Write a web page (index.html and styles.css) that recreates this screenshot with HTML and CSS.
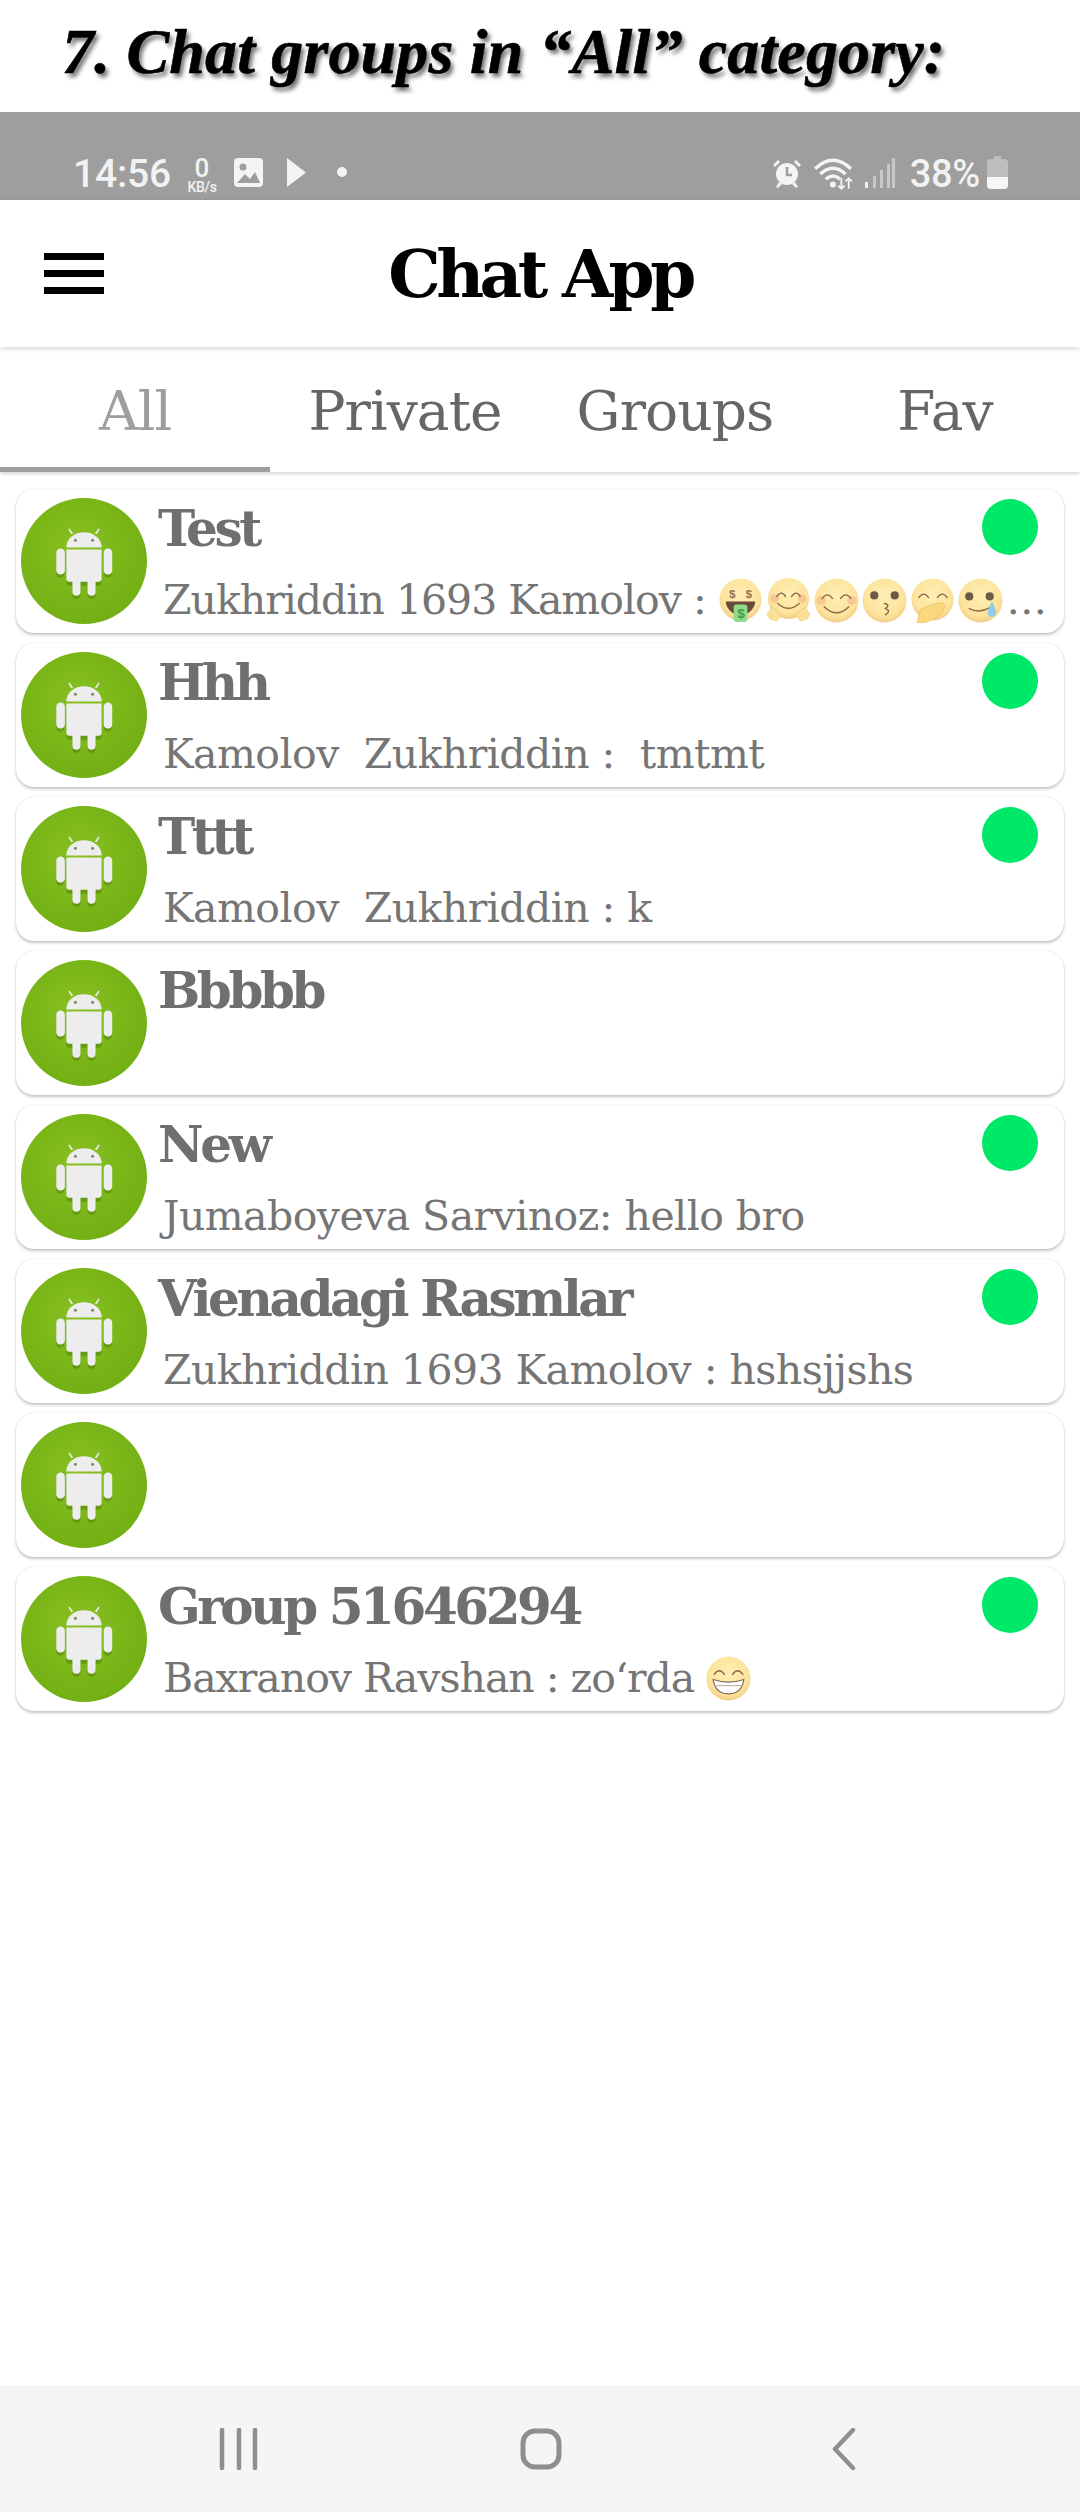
FILE: index.html
```html
<!DOCTYPE html>
<html lang="en">
<head>
<meta charset="utf-8">
<title>Chat App</title>
<link rel="stylesheet" href="styles.css">
</head>
<body>
<svg class="defs" width="0" height="0" aria-hidden="true">
  <defs>
    <radialGradient id="face" cx="50%" cy="40%" r="60%"><stop offset="0" stop-color="#ffeeb4"/><stop offset=".75" stop-color="#fde49c"/><stop offset="1" stop-color="#f2cd8a"/></radialGradient>
    <radialGradient id="ava" cx="45%" cy="40%" r="70%"><stop offset="0" stop-color="#88c020"/><stop offset="1" stop-color="#6fad12"/></radialGradient>
    <symbol id="android" viewBox="0 0 125 125">
      <circle cx="62.5" cy="62.5" r="62.5" fill="url(#ava)"/>
      <g fill="#2d5a00" opacity=".3" transform="translate(0 3)">
        <rect x="45" y="50" width="35" height="34" rx="3"/><rect x="35" y="50" width="8" height="26" rx="4"/><rect x="82" y="50" width="8" height="26" rx="4"/><rect x="51" y="80" width="8" height="17" rx="4"/><rect x="66" y="80" width="8" height="17" rx="4"/>
      </g>
      <g fill="#ededed">
        <path d="M45 49c0-9 8-15 17.500-15S80 40 80 49z"/>
        <path d="M50 36l-3-5 1.200-.8 3.500 5zM75 36l3-5-1.200-.8-3.500 5z"/>
        <path d="M45 51h35v29a3 3 0 0 1-3 3h-3v10a4 4 0 0 1-8 0V83h-7v10a4 4 0 0 1-8 0V83h-3a3 3 0 0 1-3-3z"/>
        <rect x="35" y="50" width="8.500" height="26" rx="4.200"/><rect x="82" y="50" width="8.500" height="26" rx="4.200"/>
      </g>
      <circle cx="54" cy="42" r="1.500" fill="#7a8a60"/><circle cx="71" cy="42" r="1.500" fill="#7a8a60"/>
    </symbol>
    <symbol id="e-money" viewBox="0 0 44 46">
      <circle cx="22" cy="22" r="21.500" fill="url(#face)"/>
      <path d="M7 24h30c0 7-7 14-15 14S7 31 7 24z" fill="#6b4a3a"/>
      <rect x="15" y="27" width="14" height="18" rx="3" fill="#8fdc8c"/>
      <text class="e-cash" x="22" y="41" text-anchor="middle">$</text>
      <text class="e-cash2" x="13" y="20" text-anchor="middle">$</text>
      <text class="e-cash2" x="30" y="20" text-anchor="middle">$</text>
    </symbol>
    <symbol id="e-hug" viewBox="0 0 46 46">
      <circle cx="23" cy="21" r="21" fill="url(#face)"/>
      <circle cx="9" cy="21" r="4.500" fill="#f7b08a" opacity=".6"/><circle cx="37" cy="21" r="4.500" fill="#f7b08a" opacity=".6"/>
      <path class="e-line" d="M11 19q5-7 9 0M26 19q5-7 9 0M12 26q11 10 22 0"/>
      <path d="M1 37l5-7 6 4 3 4-4 6-7-2zM45 37l-5-7-6 4-3 4 4 6 7-2z" fill="#fbdf94" stroke="#e8c77e" stroke-width=".6"/>
    </symbol>
    <symbol id="e-smile" viewBox="0 0 44 44">
      <circle cx="22" cy="22" r="21.500" fill="url(#face)"/>
      <circle cx="7" cy="22" r="4.500" fill="#f7b08a" opacity=".6"/><circle cx="37" cy="22" r="4.500" fill="#f7b08a" opacity=".6"/>
      <path class="e-line" d="M8 20q5-7 10 0M26 20q5-7 10 0M10 28q12 12 24 0"/>
    </symbol>
    <symbol id="e-kiss" viewBox="0 0 44 44">
      <circle cx="22" cy="22" r="21.500" fill="url(#face)"/>
      <circle cx="12" cy="17" r="4" fill="#6b5a48"/><circle cx="32" cy="17" r="4" fill="#6b5a48"/>
      <path class="e-line" d="M22 25q6 1 1 5q6 2 0 6"/>
    </symbol>
    <symbol id="e-cover" viewBox="0 0 44 46">
      <circle cx="22" cy="22" r="21.500" fill="url(#face)"/>
      <path class="e-line" d="M8 20q5-7 10 0M27 20q5-7 10 0"/>
      <path d="M6 46l4-14 12-5 10-2 3 4-4 8-10 6-8 3z" fill="#fbd77e" stroke="#e7ba5f" stroke-width=".7"/>
    </symbol>
    <symbol id="e-tear" viewBox="0 0 44 44">
      <circle cx="22" cy="22" r="21.500" fill="url(#face)"/>
      <circle cx="11" cy="18" r="4" fill="#6b5a48"/><circle cx="31" cy="18" r="4" fill="#6b5a48"/>
      <path class="e-line" d="M11 30q10 5 20 -1"/>
      <path d="M33 23q5 8 4 11a4 4 0 0 1-8 0q0-3 4-11z" fill="#8fcce8"/>
    </symbol>
    <symbol id="e-grin" viewBox="0 0 44 44">
      <circle cx="22" cy="22" r="21.500" fill="url(#face)"/>
      <path class="e-line" d="M8 18q5-7 10 0M26 18q5-7 10 0"/>
      <path d="M7 23q15 5 30 0q-2 14-15 14T7 23z" fill="#fff" stroke="#7b6a55" stroke-width="1.200"/>
      <path d="M8 29h28" stroke="#b9ad9c" stroke-width="1"/>
    </symbol>
  </defs>
</svg>

<div class="page">
  <h1 class="caption">7. Chat groups in “All” category:</h1>

  <div class="status">
    <div class="status-left">
      <span class="clock">14:56</span>
      <span class="speed"><b>0</b><i>KB/s</i></span>
      <svg class="ic-img" viewBox="0 0 29 29"><rect width="29" height="29" rx="4" fill="#f4f4f4"/><circle cx="9" cy="9" r="3.500" fill="#9e9e9e"/><path d="M3 25l8-9 5 5 5-7 5 11z" fill="#9e9e9e"/></svg>
      <svg class="ic-play" viewBox="0 0 19 29"><path d="M0 0l19 14.500L0 29z" fill="#f4f4f4"/></svg>
      <span class="dot-small"></span>
    </div>
    <div class="status-right">
      <svg class="ic-alarm" viewBox="0 0 30 30"><circle cx="15" cy="16" r="11" fill="#f4f4f4"/><path d="M1 7l5-5 2 2-5 5zM29 7l-5-5-2 2 5 5zM7 24l-3 5 2 1 4-4zM23 24l3 5-2 1-4-4z" fill="#f4f4f4"/><path d="M15 9v8h5" stroke="#9e9e9e" stroke-width="2.500" fill="none"/></svg>
      <svg class="ic-wifi" viewBox="0 0 38 32"><g fill="none" stroke="#f4f4f4" stroke-width="3.200"><path d="M1 11Q18-5 35 11"/><path d="M6 16Q18 5 30 16"/><path d="M11 21q7-6 14 0"/></g><circle cx="18" cy="26" r="2.800" fill="#f4f4f4"/><path d="M26 20v10m-3-3l3 3 3-3M33 30V20m-3 3l3-3 3 3" stroke="#f4f4f4" stroke-width="1.700" fill="none"/></svg>
      <svg class="ic-signal" viewBox="0 0 30 30"><g fill="#c8c8c8"><rect x="0" y="24" width="3" height="6" fill="#f0f0f0"/><rect x="8" y="18" width="3" height="12"/><rect x="15" y="12" width="3" height="18"/><rect x="22" y="6" width="3" height="24"/><rect x="27" y="0" width="3" height="30"/></g></svg>
      <span class="pct">38%</span>
      <svg class="ic-batt" viewBox="0 0 21 33"><path d="M7 0h7v3h3a4 4 0 0 1 4 4v22a4 4 0 0 1-4 4H4a4 4 0 0 1-4-4V7a4 4 0 0 1 4-4h3z" fill="#bdbdbd"/><path d="M0 21h21v8a4 4 0 0 1-4 4H4a4 4 0 0 1-4-4z" fill="#f6f6f6"/></svg>
    </div>
  </div>

  <header class="appbar">
    <div class="burger"><span></span><span></span><span></span></div>
    <div class="app-title">Chat App</div>
  </header>

  <nav class="tabs">
    <div class="tab tab-active">All</div>
    <div class="tab">Private</div>
    <div class="tab">Groups</div>
    <div class="tab">Fav</div>
  </nav>

  <main class="list">
    <article class="card">
      <svg class="avatar"><use href="#android"/></svg>
      <div class="body">
        <div class="name-row"><span class="name">Test</span><span class="online"></span></div>
        <div class="msg msg-tight">Zukhriddin 1693 Kamolov :
          <svg class="emo emo-first"><use href="#e-money"/></svg><svg class="emo"><use href="#e-hug"/></svg><svg class="emo"><use href="#e-smile"/></svg><svg class="emo"><use href="#e-kiss"/></svg><svg class="emo"><use href="#e-cover"/></svg><svg class="emo"><use href="#e-tear"/></svg><span class="more">...</span></div>
      </div>
    </article>
    <article class="card">
      <svg class="avatar"><use href="#android"/></svg>
      <div class="body">
        <div class="name-row"><span class="name">Hhh</span><span class="online"></span></div>
        <div class="msg">Kamolov&nbsp; Zukhriddin :&nbsp; tmtmt</div>
      </div>
    </article>
    <article class="card">
      <svg class="avatar"><use href="#android"/></svg>
      <div class="body">
        <div class="name-row"><span class="name">Tttt</span><span class="online"></span></div>
        <div class="msg">Kamolov&nbsp; Zukhriddin : k</div>
      </div>
    </article>
    <article class="card">
      <svg class="avatar"><use href="#android"/></svg>
      <div class="body">
        <div class="name-row"><span class="name">Bbbbb</span></div>
      </div>
    </article>
    <article class="card">
      <svg class="avatar"><use href="#android"/></svg>
      <div class="body">
        <div class="name-row"><span class="name">New</span><span class="online"></span></div>
        <div class="msg">Jumaboyeva Sarvinoz: hello bro</div>
      </div>
    </article>
    <article class="card">
      <svg class="avatar"><use href="#android"/></svg>
      <div class="body">
        <div class="name-row"><span class="name">Vienadagi Rasmlar</span><span class="online"></span></div>
        <div class="msg">Zukhriddin 1693 Kamolov : hshsjjshs</div>
      </div>
    </article>
    <article class="card">
      <svg class="avatar"><use href="#android"/></svg>
      <div class="body"></div>
    </article>
    <article class="card">
      <svg class="avatar"><use href="#android"/></svg>
      <div class="body">
        <div class="name-row"><span class="name">Group 51646294</span><span class="online"></span></div>
        <div class="msg msg-tight">Baxranov Ravshan : zoʻrda <svg class="emo emo-first"><use href="#e-grin"/></svg></div>
      </div>
    </article>
  </main>

  <footer class="navbar">
    <svg class="nav-ic nav-recents" viewBox="0 0 40 42"><path d="M3 2v38M20 2v38M36 2v38" stroke="#8f8f8f" stroke-width="4.500" stroke-linecap="round" fill="none"/></svg>
    <svg class="nav-ic nav-home" viewBox="0 0 42 42"><rect x="3" y="3" width="36" height="36" rx="12" stroke="#8f8f8f" stroke-width="5" fill="none"/></svg>
    <svg class="nav-ic nav-back" viewBox="0 0 24 42"><path d="M21 2L3 21l18 19" stroke="#8f8f8f" stroke-width="4.500" stroke-linecap="round" stroke-linejoin="round" fill="none"/></svg>
  </footer>
</div>
</body>
</html>
```

FILE: styles.css
```css
* { box-sizing: border-box; }
html, body { margin: 0; padding: 0; background: #fff; }
body { font-family: "DejaVu Serif", "Liberation Serif", serif; }
.defs { position: absolute; }
.page { width: 1080px; height: 2512px; display: flex; flex-direction: column; overflow: hidden; }

.caption {
  height: 112px; margin: 0; padding: 14px 0 0 62px;
  font: italic 700 64px/76px "Liberation Serif", serif;
  letter-spacing: 0.15px; color: #000; white-space: nowrap;
  -webkit-text-stroke: .6px #000;
  text-shadow: 3px 4px 4px rgba(0,0,0,.55);
}

.status {
  height: 88px; background: #9e9e9e; padding: 42px 72px 0 73px;
  display: flex; justify-content: space-between; align-items: flex-start;
  color: #f2f2f2; font-family: Roboto, sans-serif;
}
.status-left, .status-right { display: flex; align-items: flex-start; }
.clock { font-size: 39px; line-height: 40px; font-weight: 500; width: 103px; letter-spacing: -.2px; }
.speed { width: 52px; margin-right: 6px; display: flex; flex-direction: column; align-items: center; margin-top: 2px; }
.speed b { font-weight: 500; font-size: 26px; line-height: 24px; }
.speed i { font-style: normal; font-weight: 500; font-size: 14px; line-height: 14px; letter-spacing: -.3px; }
.ic-img { width: 29px; height: 29px; margin: 4px 0 0 0; }
.ic-play { width: 19px; height: 29px; margin: 4px 0 0 24px; }
.dot-small { width: 10px; height: 10px; border-radius: 50%; background: #f4f4f4; margin: 13px 0 0 31px; }
.ic-alarm { width: 30px; height: 30px; margin-top: 4px; }
.ic-wifi { width: 40px; height: 34px; margin: 3px 0 0 12px; }
.ic-signal { width: 30px; height: 30px; margin: 4px 0 0 11px; }
.pct { font-size: 38px; line-height: 40px; font-weight: 500; margin-left: 15px; letter-spacing: -.3px; }
.ic-batt { width: 21px; height: 33px; margin: 2px 0 0 7px; }

.appbar {
  height: 147px; position: relative; z-index: 1; display: flex; align-items: center; justify-content: center;
  background: #fff; box-shadow: 0 2px 5px rgba(0,0,0,.16);
}
.burger { position: absolute; left: 44px; top: 53px; width: 60px; display: flex; flex-direction: column; gap: 10px; }
.burger span { display: block; height: 7px; background: #000; }
.app-title { font-size: 66px; font-weight: 700; color: #000; letter-spacing: -4.600px; line-height: 80px; }

.tabs {
  height: 125px; display: grid; grid-template-columns: repeat(4, 1fr);
  background: #fff; box-shadow: 0 2px 3px rgba(0,0,0,.16); position: relative;
}
.tab {
  display: flex; align-items: center; justify-content: center; padding-top: 8px;
  font-size: 55px; letter-spacing: -.9px; color: #666; border-bottom: 5px solid transparent;
}
.tab-active { color: #9e9e9e; border-bottom-color: #9e9e9e; }

.list { flex: 1; padding: 17px 16px 0; display: flex; flex-direction: column; gap: 10px; }
.card {
  height: 144px; background: #fff; border-radius: 18px; display: flex; align-items: flex-start;
  padding: 9px 0 0 5px; box-shadow: 0 2px 3px rgba(0,0,0,.22), 0 0 1px rgba(0,0,0,.2);
}
.avatar { width: 126px; height: 126px; flex: none; }
.body { flex: 1; min-width: 0; padding: 0 26px 0 11px; }
.name-row { display: flex; justify-content: space-between; align-items: flex-start; height: 62px; }
.name { font-size: 50px; font-weight: 700; line-height: 62px; color: #6f6f6f; letter-spacing: -3.400px; white-space: nowrap; }
.online { width: 56px; height: 56px; border-radius: 50%; background: #00e868; margin-top: 1px; }
.msg {
  font-size: 41px; line-height: 50px; color: #757575; white-space: nowrap; padding-left: 5px; margin-top: 15px;
  letter-spacing: -.55px; display: flex; align-items: center;
}
.msg-tight { letter-spacing: -1px; }
.emo { width: 45px; height: 45px; flex: none; margin-left: 3px; }
.emo-first { margin-left: 12px; }
.more { margin-left: 4px; letter-spacing: .5px; }
.e-line { fill: none; stroke: #8a6a4a; stroke-width: 1.400; stroke-linecap: round; }
.e-cash { font: 700 14px "Liberation Sans", sans-serif; fill: #3f9a48; }
.e-cash2 { font: 700 12px "Liberation Sans", sans-serif; fill: #9a7350; }

.navbar {
  height: 126px; background: #f5f5f5; position: relative; flex: none;
  display: grid; grid-template-columns: 480px 120px 1fr; align-items: center;
}
.nav-ic { display: block; }
.nav-recents { width: 40px; height: 42px; margin-left: 219px; }
.nav-home { width: 42px; height: 42px; margin-left: 40px; }
.nav-back { width: 24px; height: 42px; margin-left: 232px; }
```
